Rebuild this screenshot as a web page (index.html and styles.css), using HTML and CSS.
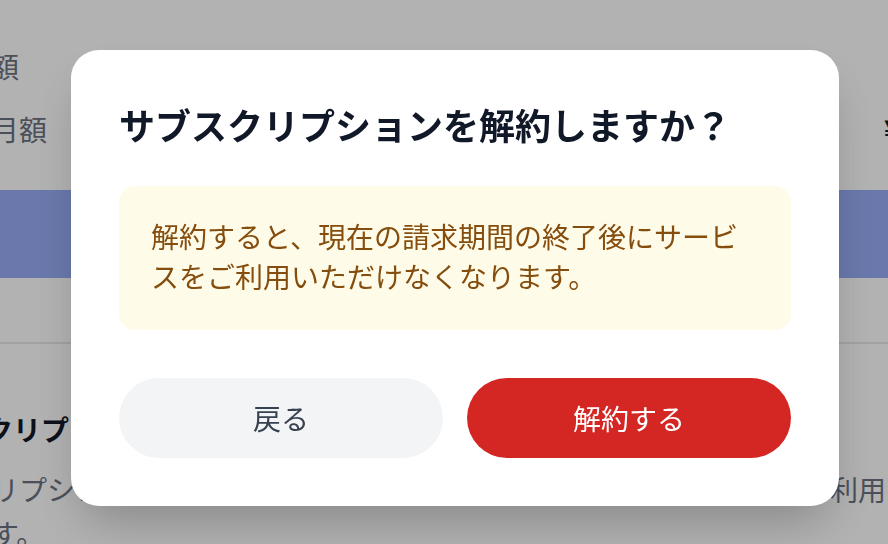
FILE: index.html
```html
<!DOCTYPE html>
<html lang="ja">
<head>
    <meta charset="UTF-8">
    <meta name="viewport" content="width=device-width, initial-scale=1.0">
    <title>サブスクリプション</title>
    <link rel="stylesheet" href="styles.css">
</head>
<body>
    <div class="page">
        <div class="summary">
            <div class="row">
                <span class="label">請求額</span>
            </div>
            <div class="row">
                <span class="label">基本月額</span>
                <span class="price">¥980</span>
            </div>
        </div>
        <div class="plan-banner"></div>
        <div class="divider"></div>
        <section class="cancel-section">
            <h2 class="section-title">サブスクリプションの解約</h2>
            <p class="section-text">スクリプションを解約すると、現在の請求期間の終了後にサービスをご利用いただけなくな<br>ります。</p>
        </section>
    </div>

    <div class="overlay">
        <div class="modal" role="dialog">
            <h1 class="modal-title">サブスクリプションを解約しますか？</h1>
            <div class="notice">解約すると、現在の請求期間の終了後にサービスをご利用いただけなくなります。</div>
            <div class="actions">
                <button class="btn btn-back">戻る</button>
                <button class="btn btn-cancel">解約する</button>
            </div>
        </div>
    </div>
</body>
</html>
```

FILE: styles.css
```css
html, body {
    margin: 0;
    overflow: hidden;
    height: 100%;
}

body {
    background: #ffffff;
    font-family: "Noto Sans CJK JP", "Noto Sans", sans-serif;
    color: #111827;
}

.page {
    margin-left: -65px;
    width: 1015px;
}

.summary {
    padding-top: 34px;
}

.row {
    display: flex;
    justify-content: space-between;
    align-items: center;
    height: 63px;
    font-size: 28px;
}

.label {
    color: #6b7280;
}

.price {
    font-weight: 700;
    color: #111827;
}

.plan-banner {
    margin-top: 30px;
    height: 88px;
    background: #98adf7;
}

.divider {
    margin-top: 64px;
    height: 2px;
    background: #e8e8e8;
}

.cancel-section {
    padding-top: 64px;
}

.section-title {
    margin: 0 0 0 -34px;
    font-size: 28px;
    line-height: 42px;
    font-weight: 700;
    white-space: nowrap;
}

.section-text {
    margin: 17px 0 0;
    font-size: 28px;
    line-height: 44px;
    color: #6b7280;
    white-space: nowrap;
}

.overlay {
    position: fixed;
    inset: 0;
    background: rgba(0, 0, 0, 0.3);
    display: flex;
    align-items: flex-start;
    padding: 50px 0 0 71px;
}

.modal {
    width: 768px;
    box-sizing: border-box;
    padding: 48px;
    background: #ffffff;
    border-radius: 28px;
    box-shadow: 0 25px 50px -12px rgba(0, 0, 0, 0.25);
}

.modal-title {
    margin: 0 0 36px;
    font-size: 36px;
    line-height: 52px;
    font-weight: 700;
    color: #111827;
}

.notice {
    padding: 30px 32px 34px;
    background: #fefce8;
    border-radius: 16px;
    font-size: 28px;
    line-height: 40px;
    color: #854d0e;
}

.actions {
    display: grid;
    grid-template-columns: 1fr 1fr;
    gap: 24px;
    margin-top: 48px;
}

.btn {
    height: 80px;
    border: none;
    border-radius: 40px;
    font-family: inherit;
    font-size: 28px;
    cursor: pointer;
}

.btn-back {
    background: #f3f4f6;
    color: #374151;
}

.btn-cancel {
    background: #d42623;
    color: #ffffff;
}
```
